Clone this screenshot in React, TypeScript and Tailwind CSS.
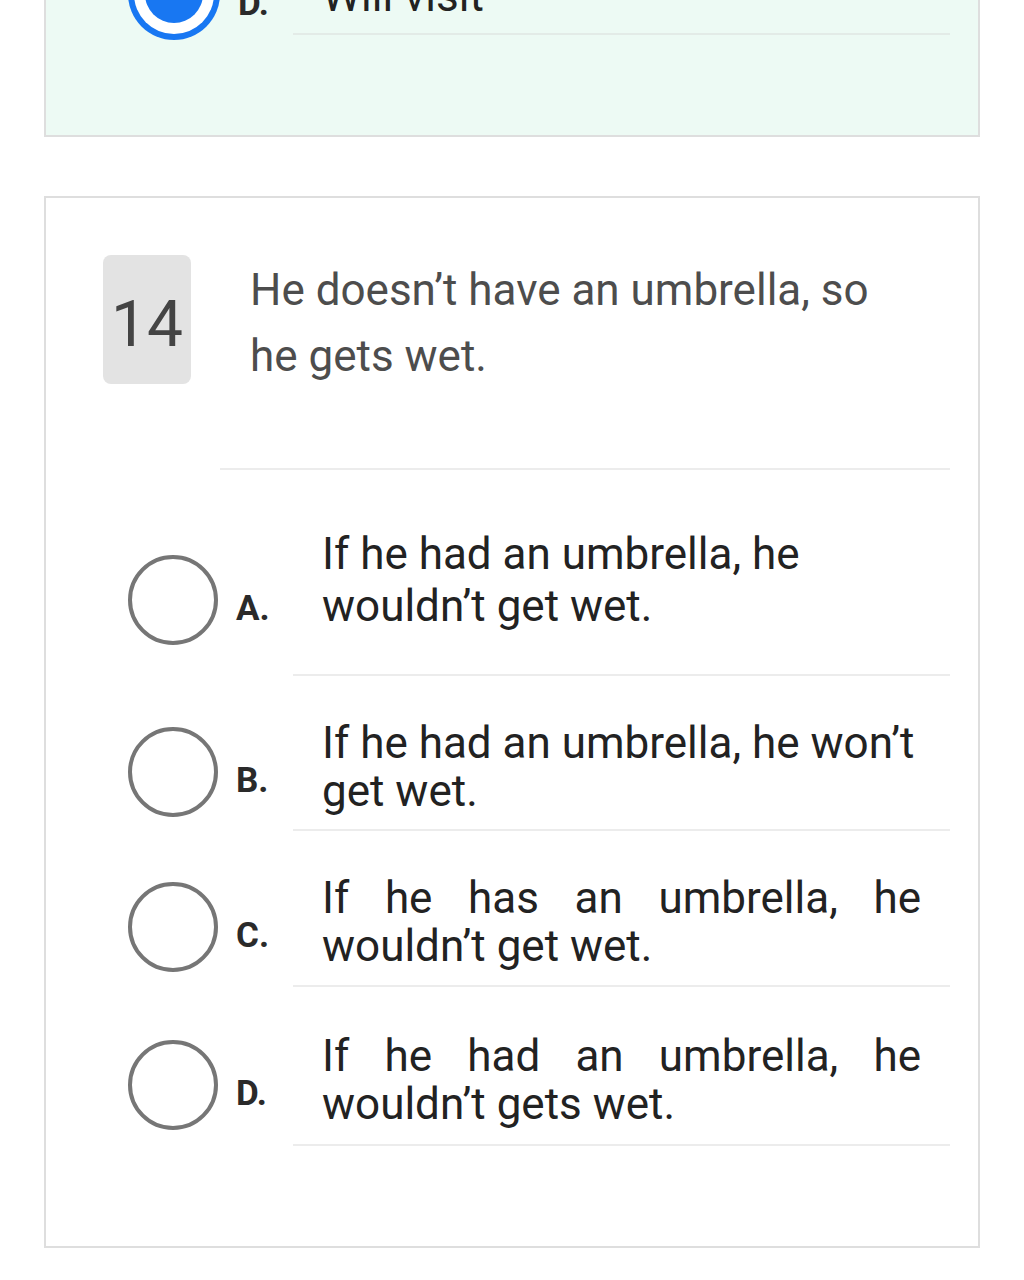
import React from "react";

const font = { fontFamily: "Roboto, 'Noto Sans', sans-serif" };

type Opt = { label: string; text: string; justify?: boolean };

function Radio() {
  return <div className="w-[90px] h-[90px] rounded-full border-[4px] border-[#767676] bg-white shrink-0" />;
}

function Row({ o, rowPt, radioMt, pb, lh }: { o: Opt; rowPt: string; radioMt: string; pb: string; lh: string }) {
  return (
    <div className="flex items-start pr-[28px]">
      <div className={`w-[247px] shrink-0 flex items-center pl-[82px] gap-[18px] ${radioMt}`}>
        <Radio />
        <span className="pt-[18px] text-[35px] font-bold text-[#2a2a2a]">{o.label}</span>
      </div>
      <div className={`flex-1 border-b-2 border-[#ececec] px-[29px] ${rowPt} ${pb}`}>
        <p className={`text-[44px] ${lh} text-[#222] ${o.justify ? "text-justify" : ""}`}>{o.text}</p>
      </div>
    </div>
  );
}

export default function App() {
  const opts: Opt[] = [
    { label: "A.", text: "If he had an umbrella, he wouldn\u2019t get wet." },
    { label: "B.", text: "If he had an umbrella, he won\u2019t get wet." },
    { label: "C.", text: "If he has an umbrella, he wouldn\u2019t get wet.", justify: true },
    { label: "D.", text: "If he had an umbrella, he wouldn\u2019t gets wet.", justify: true },
  ];
  return (
    <div className="min-h-[1280px] bg-white overflow-hidden" style={font}>
      {/* previous question card (cut off) */}
      <div className="mx-[44px] -mt-[100px] border-2 border-[#dedede] bg-[#edfaf4] pt-[27px] pb-[95px]">
        <div className="flex items-start pr-[28px]">
          <div className="w-[247px] shrink-0 flex items-center pl-[82px] gap-[18px] mt-[19px]">
            <div className="w-[92px] h-[92px] rounded-full bg-[#1877f2] flex items-center justify-center shrink-0">
              <div className="w-[80px] h-[80px] rounded-full bg-white flex items-center justify-center">
                <div className="w-[58px] h-[58px] rounded-full bg-[#1877f2]" />
              </div>
            </div>
            <span className="pt-[20px] text-[35px] font-bold text-[#2a2a2a]">D.</span>
          </div>
          <div className="flex-1 border-b-2 border-[#e3ebe7] px-[29px] pt-[43px] pb-[13px]">
            <p className="text-[44px] leading-[48px] text-[#222]">Will visit</p>
          </div>
        </div>
      </div>

      {/* question 14 */}
      <div className="mx-[44px] mt-[59px] border-2 border-[#dedede] bg-white pt-[57px] pb-[100px]">
        <div className="flex items-start pl-[57px]">
          <div className="w-[88px] h-[129px] rounded-[8px] bg-[#e3e3e3] flex items-center justify-center shrink-0">
            <span className="text-[64px] text-[#444] leading-none pt-[10px]">14</span>
          </div>
          <p className="ml-[59px] mt-[2px] w-[640px] text-[44px] leading-[66px] text-[#4d4d4d]">
            He doesn&rsquo;t have an umbrella, so he gets wet.
          </p>
        </div>
        <div className="ml-[174px] mr-[28px] mt-[79px] border-b-2 border-[#ececec]" />

        <Row o={opts[0]} rowPt="pt-[58px]" radioMt="mt-[85px]" pb="pb-[42px]" lh="leading-[52px]" />
        <Row o={opts[1]} rowPt="pt-[43px]" radioMt="mt-[51px]" pb="pb-[14px]" lh="leading-[48px]" />
        <Row o={opts[2]} rowPt="pt-[43px]" radioMt="mt-[51px]" pb="pb-[15px]" lh="leading-[48px]" />
        <Row o={opts[3]} rowPt="pt-[45px]" radioMt="mt-[53px]" pb="pb-[16px]" lh="leading-[48px]" />
      </div>
    </div>
  );
}
